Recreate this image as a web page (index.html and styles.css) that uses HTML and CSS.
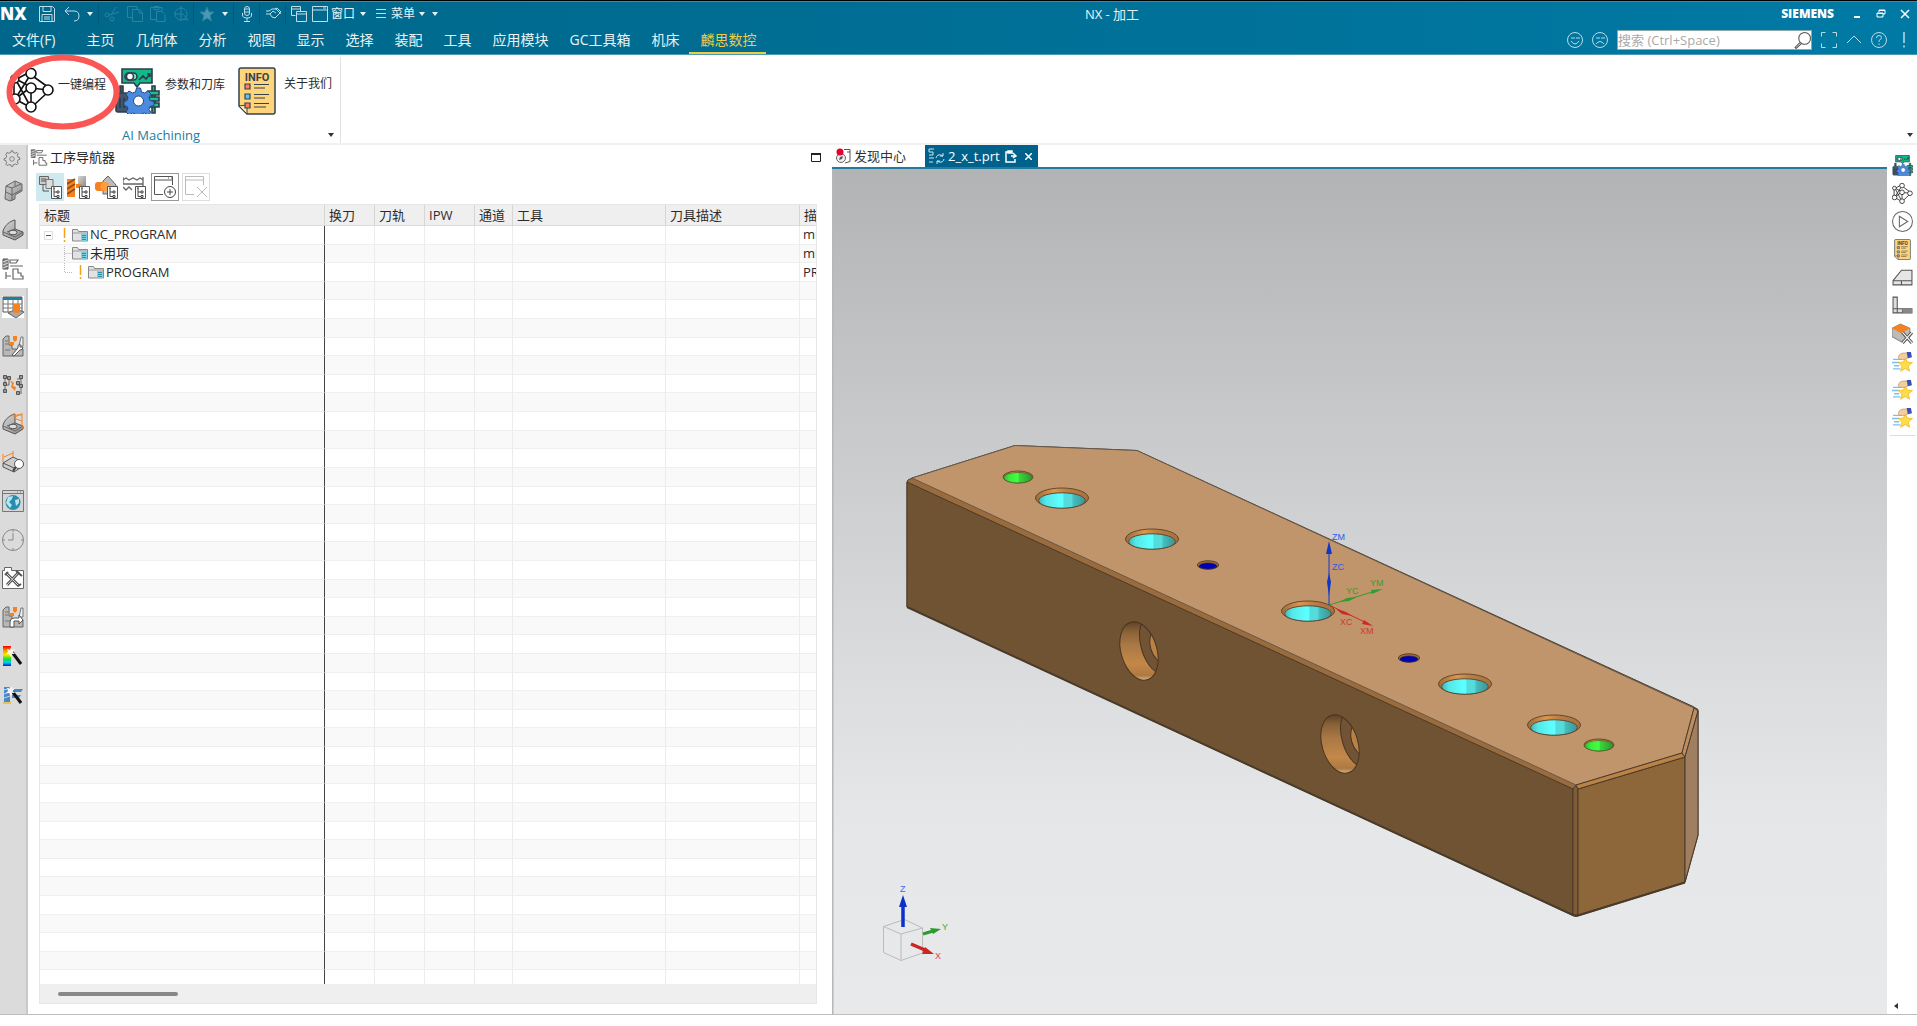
FILE: index.html
```html
<!DOCTYPE html>
<html lang="zh-CN">
<head>
<meta charset="utf-8">
<title>NX - 加工</title>
<link rel="stylesheet" href="styles.css">
</head>
<body>
<svg class="defs" aria-hidden="true">
  <defs>
    <linearGradient id="metal" x1="0" y1="0" x2="1" y2="1"><stop offset="0" stop-color="#d6d6d6"/><stop offset="1" stop-color="#8c8c8c"/></linearGradient>
    <linearGradient id="sky" x1="0" y1="0" x2="0" y2="1"><stop offset="0" stop-color="#b2b3b5"/><stop offset=".3" stop-color="#c8c9cb"/><stop offset=".66" stop-color="#dfe0e2"/><stop offset=".78" stop-color="#e5e7e9"/><stop offset="1" stop-color="#e7e9eb"/></linearGradient>
    <linearGradient id="cyan"><stop offset="0" stop-color="#3fb9bb"/><stop offset=".15" stop-color="#55e6e6"/><stop offset=".45" stop-color="#5cffff"/><stop offset=".52" stop-color="#5cffff"/><stop offset=".54" stop-color="#54dcdc"/><stop offset=".7" stop-color="#54dcdc"/><stop offset=".75" stop-color="#45bcbc"/><stop offset="1" stop-color="#3f9394"/></linearGradient>
    <linearGradient id="green"><stop offset="0" stop-color="#34b834"/><stop offset=".2" stop-color="#3dea3d"/><stop offset=".5" stop-color="#42ff42"/><stop offset=".54" stop-color="#38d838"/><stop offset="1" stop-color="#2c972c"/></linearGradient>
    <linearGradient id="rim"><stop offset="0" stop-color="#9a6b3d"/><stop offset=".35" stop-color="#dd964d"/><stop offset=".6" stop-color="#b87f45"/><stop offset="1" stop-color="#a5713e"/></linearGradient>
    <linearGradient id="bore" x1="0" y1="0" x2="0" y2="1"><stop offset="0" stop-color="#4e3a24"/><stop offset=".2" stop-color="#8a6237"/><stop offset=".4" stop-color="#a87845"/><stop offset=".7" stop-color="#c48848"/><stop offset=".88" stop-color="#ad7942"/><stop offset="1" stop-color="#f0d0a8"/></linearGradient>
    <linearGradient id="rainbow" x1="0" y1="0" x2="0" y2="1"><stop offset="0" stop-color="#f20000"/><stop offset=".25" stop-color="#ff9d00"/><stop offset=".45" stop-color="#e6f000"/><stop offset=".65" stop-color="#16e032"/><stop offset=".82" stop-color="#00d0f0"/><stop offset="1" stop-color="#0018d8"/></linearGradient>
  </defs>
  <symbol id="network" viewBox="0 0 44 45"><g fill="none" stroke="#111" stroke-width="1.600"><path d="M18 5 3 13M24 9 38 19M19 9 7 28M21 19 4 10M21 19 5 31M21 20 38 22M21 19V36M16 37 5 31M4 13V28M24 37 38 24M6 12 19 36"/><g fill="#fff"><circle cx="21" cy="5.500" r="5"/><circle cx="4.800" cy="11" r="4"/><circle cx="21" cy="20" r="5"/><circle cx="38" cy="22" r="5"/><circle cx="5" cy="31" r="5"/><circle cx="21" cy="39" r="5"/></g></g></symbol>
  <symbol id="params" viewBox="0 0 46 46"><g stroke="#2b3d4d" stroke-width="1.600"><path d="M8 1h30v14H26l-3 4-3-4H8z" fill="#12b886"/><rect x="11" y="5" width="12" height="7" rx="3.500" fill="#8fe3cc"/><circle cx="16" cy="8.500" r="3.500" fill="#fff"/><path d="m25 12 4-4 3 3 4-5M33 6h3v3" fill="none"/><path d="M6 18h3v6H6z" fill="#44576a"/><rect x="2" y="25" width="12" height="19" rx="2" fill="#44576a"/><path d="M6 30v10M10 30v10" fill="none"/><path d="M38 18h3v27h-3z" fill="#12b886"/><path d="M34 23h11v4H34zM35 29h10v4H35zM34 35h11v4H34z" fill="#18c391"/></g><path d="m22.500 20h4l1 4 3 1 3.500-2 3 3-2 3.500 1 3 4 1v4l-4 1-1 3 2 3-3 2.500-3.500-2-3 1-1 1h-4l-1-1-3-1-3.500 2-3-3 2-3.500-1-2-3-1v-4l3-1 1-3-2-3.500 3-3 3.500 2 3-1z" fill="#4a8be0" stroke="#254b7d"/><circle cx="24.500" cy="33" r="5" fill="#fff" stroke="#254b7d"/></symbol>
  <symbol id="info" viewBox="0 0 38 48"><path d="M3 1h32q2 0 2 2v42q0 2-2 2H9l-8-8V3q0-2 2-2z" fill="#ffd57c" stroke="#36434d" stroke-width="1.500"/><path d="m1 39 8-1v9z" fill="#ffe9b5" stroke="#36434d"/><g stroke="#36434d" stroke-width="1.200"><path d="M7 17h5v5H7z" fill="#ff7e61"/><path d="M7 27h5v5H7z" fill="#60c6ed"/><path d="M7 36h5v5H7z" fill="#ff7e61"/><path d="M16 17.500h15M16 21h11M16 27.500h15M16 31h11M16 36.500h15M16 40h12"/></g><text x="19" y="14" text-anchor="middle" class="info-word">INFO</text></symbol>
  <symbol id="folder" viewBox="0 0 16 14"><path d="M.5 1.500h5l1 2h9v9.500H.5z" fill="#e2e2e2" stroke="#888"/><path d="M1 5h14" stroke="#999"/><path d="M9 6h6v7H9z" fill="#7fd0e4"/><path d="M10 7.500h4M10 9.500h4M10 11.500h4" stroke="#2e8ca8"/></symbol>
  <symbol id="tree" viewBox="0 0 11 13"><path d="M.5.5h10v12H.5z" fill="#fff" stroke="#555"/><path d="M3 2v8.500h3M3 6h3M6 5h2v2H6zM6 9.500h2v2H6zM2 2h2" fill="none" stroke="#444"/></symbol>
  <symbol id="opnav" viewBox="0 0 22 22"><path d="M1 1h5v10H1z" fill="#888" stroke="#555"/><path d="m1 4 5-2M1 7l5-2M1 10l5-2" stroke="#ddd"/><path d="M8 2h8l-2 3H8zM8 8h13M4 14v7M4 18h5M11 21V11h5v4h3v3h2v3z" fill="none" stroke="#666" stroke-width="1.200"/></symbol>
  <symbol id="machine" viewBox="0 0 22 22"><path d="M1 4 4 1h3v9h3v4h11v7H1z" fill="#b8b8b8" stroke="#666"/><path d="M3 6h3M3 9h3M3 15h5M17 11l2-9 2 0v9z" fill="#eee" stroke="#777"/><path d="M11 1h4v4l-2 2-2-2zM8 7h4v3H8z" fill="#f5821f"/></symbol>
  <symbol id="block" viewBox="0 0 22 22"><path d="m1 12 10-6 10 5v4l-9 6-11-5z" fill="#ccc" stroke="#555"/><path d="m1 12 11 5 9-6M12 17v4" fill="none" stroke="#555"/></symbol>
  <symbol id="bracket" viewBox="0 0 22 22"><path d="M1 12C3 6 8 2 13 1v9l8 3v3l-8 5-12-5z" fill="url(#metal)" stroke="#555"/><path d="m1 13 12 5 8-5M13 10 5 13" fill="none" stroke="#666"/><ellipse cx="11" cy="13.500" rx="4" ry="2.300" fill="#ddd" stroke="#555"/></symbol>
  <symbol id="wand" viewBox="0 0 22 22"><path d="m10 7 9 12" stroke="#111" stroke-width="3"/><path d="m9 2 1 3 3-1-2 3 2 2-3 0-1 3-2-3-3 0 2-2-1-3 3 1z" fill="#fff" opacity=".9"/></symbol>
  <symbol id="star" viewBox="0 0 20 20"><path d="M1 8h8M0 11h7M2 14h5M1 17h7" stroke="#79c0ef" stroke-width="1.300"/><path d="m12.500 6 2 4.500 5 .5-4 3.300 1.300 5-4.300-2.600-4.300 2.600 1.300-5L6 11l5-.5z" fill="#ffdc4a" stroke="#e9b724" stroke-width=".7"/><path d="M6 6q1-4 5-4h4l1 4-4 2H7z" fill="#f4cf9d" stroke="#ba8850" stroke-width=".6"/><path d="M14 1h4l1 5-4 1z" fill="#3b4fb8"/></symbol>
  <symbol id="caret" viewBox="0 0 6 4"><path d="M0 0h6L3 4z" fill="currentColor"/></symbol>
</svg>

<header class="app-header">
  <div class="title-row">
    <div class="quick">
      <span class="nx">NX</span>
      <div class="group">
        <button class="tool" aria-label="保存"><svg viewBox="0 0 16 16"><path d="M.5.5h13l2 2v13H.5zM4 .5v5h8v-5M3 15.500v-7h10v7M5 11h6M5 13h6"/></svg></button>
        <button class="tool undo" aria-label="撤消"><svg viewBox="0 0 16 16"><path d="M5 1 1 5l4 4M1 5h9q5 0 5 5t-5 5"/></svg></button>
        <button class="caret" aria-label="撤消列表"><svg><use href="#caret"/></svg></button>
      </div>
      <div class="group">
        <button class="tool" disabled aria-label="剪切"><svg viewBox="0 0 16 16"><path d="M12 1 7 9M15 6 5 9"/><circle cx="3" cy="9" r="2"/><circle cx="8" cy="13" r="2"/></svg></button>
        <button class="tool" disabled aria-label="复制"><svg viewBox="0 0 16 16"><path d="M10 3V.500H.500v11H5M5.500 3.500h7l3 3v9h-10zM12 4v3h3"/></svg></button>
        <button class="tool" disabled aria-label="粘贴"><svg viewBox="0 0 16 16"><path d="M6 13.500H.500v-12H12V5M4 .500h5v3H4zM6.500 5.500H12l3 3v7H6.500z"/></svg></button>
        <button class="tool" disabled aria-label="重复命令"><svg viewBox="0 0 16 16"><circle cx="8" cy="8" r="6"/><path d="M8 0v15M1 8h9l5 6-5-1"/></svg></button>
      </div>
      <div class="group">
        <button class="tool" disabled aria-label="收藏"><svg viewBox="0 0 16 16"><path class="solid" d="m8 1 2 5h5l-4 3.500L12.500 15 8 12l-4.500 3L5 9.500 1 6h5z"/></svg></button>
        <button class="caret" aria-label="收藏列表"><svg><use href="#caret"/></svg></button>
      </div>
      <div class="group">
        <button class="tool" aria-label="语音"><svg viewBox="0 0 16 16"><rect x="5.500" y=".5" width="5" height="9" rx="2.500"/><path d="M3.500 7v2q0 3 4.500 3t4.500-3V7M8 12v3.500M5 15.500h6M6 3h4M6 6h4"/></svg></button>
      </div>
      <div class="group">
        <button class="tool" aria-label="触控"><svg viewBox="0 0 16 16"><path d="M1 5h3l3-2h4l4 4-5 5-3-1-2-3 3-3 3 2M1 8h4M10 3l2-1 4 4-1 2"/></svg></button>
      </div>
      <div class="group last">
        <button class="tool" aria-label="切换窗口"><svg viewBox="0 0 16 16"><path d="M4.500 9.500h-4v-9h9V5M.500 3h9M5.500 5.500h10v10h-10zM5.500 8h10"/></svg></button>
        <button class="menu"><svg viewBox="0 0 16 16"><path d="M.500.500h15v15H.500zM.500 4h15M11 2h3"/></svg><span>窗口</span><svg class="small"><use href="#caret"/></svg></button>
        <button class="menu list"><svg viewBox="0 0 10 12"><path d="M0 1.500h10M0 5.500h10M0 9.500h10"/></svg><span>菜单</span><svg class="small"><use href="#caret"/></svg></button>
        <button class="caret" aria-label="自定义"><svg><use href="#caret"/></svg></button>
      </div>
    </div>
    <h1>NX - 加工</h1>
    <div class="window-tools">
      <span class="brand">SIEMENS</span>
      <button aria-label="最小化"><svg viewBox="0 0 10 10"><path d="M2 8h6" stroke-width="2"/></svg></button>
      <button aria-label="还原"><svg viewBox="0 0 10 10"><path d="M3 3V1h6v4H7M1 4h6v4H1zM1 4.500h6M3 1.500h6"/></svg></button>
      <button aria-label="关闭"><svg viewBox="0 0 10 10"><path d="m1 1 8 8M9 1 1 9" stroke-width="1.500"/></svg></button>
    </div>
  </div>
  <div class="tab-row">
    <nav class="tabs">
      <a href="#" class="file">文件(F)</a><a href="#">主页</a><a href="#">几何体</a><a href="#">分析</a><a href="#">视图</a><a href="#">显示</a><a href="#">选择</a><a href="#">装配</a><a href="#">工具</a><a href="#">应用模块</a><a href="#">GC工具箱</a><a href="#">机床</a><a href="#" class="current">麟思数控</a>
    </nav>
    <div class="help">
      <button aria-label="满意"><svg viewBox="0 0 16 16"><circle cx="8" cy="8" r="7.500"/><path d="M4 9q4 6 8 0M5 5v2M7 5v2M10 5v2M12 5v2"/></svg></button>
      <button aria-label="不满意"><svg viewBox="0 0 16 16"><circle cx="8" cy="8" r="7.500"/><path d="M4 12q4-5 8 0M5 5v2M7 5v2M10 5v2M12 5v2"/></svg></button>
      <label class="search"><input type="text" aria-label="搜索" placeholder="搜索 (Ctrl+Space)"><svg viewBox="0 0 16 16"><circle cx="10" cy="6" r="5.500"/><path d="M6 9.500 1 14.500l1 1 5.500-5"/></svg></label>
      <button aria-label="全屏"><svg viewBox="0 0 16 16"><path d="M.500 4.500v-4h4M11.500.500h4v4M15.500 11.500v4h-4M4.500 15.500h-4v-4"/></svg></button>
      <button aria-label="折叠功能区"><svg viewBox="0 0 16 16"><path d="m1 11 7-7 7 7"/></svg></button>
      <button aria-label="帮助"><svg viewBox="0 0 16 16"><circle cx="8" cy="8" r="7.500"/><path d="M5.500 6q0-2.500 2.500-2.500t2.500 2q0 1.500-2.500 3V10M8 11.500V13"/></svg></button>
      <button aria-label="通知"><svg viewBox="0 0 16 16"><path d="M8 0v11M8 13.500v2" stroke-width="1.500"/></svg></button>
    </div>
  </div>
</header>

<section class="ribbon">
  <div class="ribbon-group">
    <div class="commands">
      <button><svg width="44" height="45"><use href="#network"/></svg><span>一键编程</span></button>
      <button><svg width="46" height="46"><use href="#params"/></svg><span>参数和刀库</span></button>
      <button><svg width="38" height="48"><use href="#info"/></svg><span>关于我们</span></button>
    </div>
    <div class="group-label"><span>AI Machining</span><svg class="small"><use href="#caret"/></svg></div>
    <svg class="callout" viewBox="0 0 114 76"><ellipse cx="57" cy="38" rx="53.500" ry="34.500"/></svg>
  </div>
  <svg class="small ribbon-more"><use href="#caret"/></svg>
</section>

<main class="workspace">
  <aside class="resource-bar">
    <button class="gear" aria-label="设置"><svg viewBox="0 0 22 22"><path d="m9.500 3 .5-2h2l.5 2 2.500 1 2-1 1.500 1.500-1 2 1 2.500 2 .5v2l-2 .5-1 2.500 1 2-1.500 1.500-2-1-2.500 1-.5 2h-2l-.5-2L7 18l-2 1-1.500-1.500 1-2-1-2.500-2-.5v-2l2-.5 1-2.500-1-2L5 3l2 1z" fill="none" stroke="#777" stroke-width="1.200"/><circle cx="11" cy="11" r="2.800" fill="none" stroke="#777"/></svg></button>
    <div class="resource-list">
      <button aria-label="装配导航器"><svg viewBox="0 0 22 22"><path d="m4 6 9-5 7 3v7l-7 4v4l-5 2-5-2z" fill="url(#metal)" stroke="#666"/><path d="m4 6 6 2 9-4M10 8v13M4 12l6 3 9-5M13 1v5" fill="none" stroke="#666"/></svg></button>
      <button aria-label="部件导航器"><svg><use href="#bracket"/></svg></button>
      <button class="active" aria-label="工序导航器"><svg><use href="#opnav"/></svg></button>
      <button aria-label="加工特征导航器"><svg viewBox="0 0 22 22"><path d="M0 0h22v22H0z" fill="#fff"/><path d="M1 1h19v15H1z" fill="#fff" stroke="#555"/><path d="M1 1h19v3H1z" fill="#208099"/><path d="M1 8h19M1 12h19M6 4v12M11 4v12M16 4v12" stroke="#777"/><path d="m6 17 8-4 8 3-8 6z" fill="#aaa" stroke="#666"/><path d="M11 8h7v8q-3 2-7 0z" fill="#f5821f"/></svg></button>
      <button aria-label="机床导航器"><svg><use href="#machine"/></svg><svg class="over" viewBox="0 0 22 22"><path d="m10 20 6-7q-1-3 2-4v3h3q0 3-3 3l-6 6z" fill="#fff" stroke="#555"/></svg></button>
      <button aria-label="流程"><svg viewBox="0 0 22 22"><path d="M3 3v16M19 3v17M3 11h4V5M15 5h4M15 11h4" fill="none" stroke="#666"/><g fill="#999" stroke="#555"><path d="M1.500 1.500h3v3h-3zM5.500 2.500h3v3h-3zM1.500 8.500h3v3h-3zM1.500 15.500h3v3h-3zM17.500 1.500h3v3h-3zM14.500 7.500h3v3h-3zM17.500 10.500h3v3h-3zM14.500 17.500h3v3h-3z"/></g><path d="m8 6 4 3-1 3 3 1-1 4-4-4 1-3z" fill="#f5821f"/></svg></button>
      <button aria-label="测量"><svg><use href="#bracket"/></svg><svg class="over" viewBox="0 0 22 22"><path d="M12 2h8M12 0v4M20 0v16M13 4l6-3M14 6l6 2" stroke="#f5821f" fill="none"/></svg></button>
      <button aria-label="检查"><svg><use href="#block"/></svg><svg class="over" viewBox="0 0 22 22"><path d="m1 3v8M2 6l9-4M11 0v6" stroke="#f5821f" fill="none"/><circle cx="17" cy="13" r="4.500" fill="#fff" stroke="#555"/><path d="m14 16-3 4" stroke="#444" stroke-width="2"/></svg></button>
      <button aria-label="浏览器"><svg viewBox="0 0 22 22"><path d="M.500.500h21v21H.500z" fill="#d5d5d5" stroke="#777"/><path d="M0 3.500h22M15 2h1M18 2h1" stroke="#777"/><circle cx="11" cy="12.500" r="7.500" fill="#2a8db0"/><path d="m6 7 5-1-1 3-3 3 3 3-2 3-4-5zM13 10l4-1v4l-3 3z" fill="#b9e5ee"/></svg></button>
      <button aria-label="历史记录"><svg viewBox="0 0 22 22"><circle cx="11" cy="11" r="10.500" fill="none" stroke="#888"/><path d="M11 4v7H6M11 1v2M11 19v2M1 11h2M19 11h2" fill="none" stroke="#888"/></svg></button>
      <button aria-label="工具"><svg viewBox="0 0 22 22"><path d="M.500 3.500h2v-3h7v3h12v18H.500z" fill="#fff" stroke="#666"/><path d="m5 18 12-13M5 7l12 12" stroke="#555" stroke-width="3"/><path d="m5 18 12-13M5 7l12 12" stroke="#ddd"/><path d="m14 4 6 5M3 8l3-3M16 19l3-2" stroke="#555" stroke-width="2"/></svg></button>
      <button aria-label="机床控制"><svg><use href="#machine"/></svg><svg class="over" viewBox="0 0 22 22"><path d="M8 21v-5q0-4 4-4h5V9l4 5-4 4v-3h-5v6z" fill="#fff" stroke="#555"/></svg></button>
      <button aria-label="颜色"><svg viewBox="0 0 22 22"><path d="M1 1h8v20H1z" fill="url(#rainbow)"/></svg><svg class="over"><use href="#wand"/></svg></button>
      <button aria-label="分析向导"><svg viewBox="0 0 22 22"><path d="M2 3h6v15H2zM9 5h12l-2 3H9zM10 11h9l-2 3h-7z" fill="#4b88c9"/><path d="m2 6 6-2M2 10l6-2M2 14l6-2" stroke="#b7d5f5"/><path d="M1 19h8" stroke="#e7c44b" stroke-width="2"/></svg><svg class="over"><use href="#wand"/></svg></button>
    </div>
  </aside>

  <section class="navigator">
    <div class="nav-title"><svg width="18" height="17"><use href="#opnav"/></svg><h2>工序导航器</h2><button aria-label="最大化"><svg viewBox="0 0 10 9"><path d="M.500.500h9v8h-9z" fill="none" stroke="#222"/><path d="M0 1h10" stroke="#222" stroke-width="2"/></svg></button></div>
    <div class="nav-tools">
      <button class="on" aria-label="程序顺序视图"><svg viewBox="0 0 22 22"><path d="M.500.500h9v8h-9z" fill="#ccc" stroke="#666"/><path d="M7 3.500h7v9H7z" fill="#ddd" stroke="#777"/><path d="M2 3h5M2 5h5M4 9v6h6" fill="none" stroke="#555"/></svg><svg class="badge"><use href="#tree"/></svg></button>
      <button aria-label="机床视图"><svg viewBox="0 0 22 22"><path d="M0 3h8v18H0z" fill="#f5821f"/><path d="m0 8 8-5M0 13l8-5M0 18l8-5" stroke="#8c4b18" stroke-width="1.500"/><path d="M11 0h8v10h-8z" fill="url(#metal)"/><path d="M9 8h6v4H9z" fill="#f5821f"/></svg><svg class="badge"><use href="#tree"/></svg></button>
      <button aria-label="几何视图"><svg viewBox="0 0 22 22"><path d="m8 5 5-5 8 9v9H8z" fill="#bbb" stroke="#666"/><rect x="0" y="6" width="12" height="9" rx="3" fill="#f5821f"/><circle cx="10" cy="10.500" r="4.500" fill="#ff9d42"/></svg><svg class="badge"><use href="#tree"/></svg></button>
      <button aria-label="加工方法视图"><svg viewBox="0 0 22 22"><path d="M0 1v7M20 1v9M0 4l3-2 3 2 4-2 4 2 3-2 3 2M0 8h20M0 11l3 3 3-3 3 3" fill="none" stroke="#666" stroke-width="1.300"/></svg><svg class="badge"><use href="#tree"/></svg></button>
      <button class="boxed" aria-label="新建窗口"><svg viewBox="0 0 22 22"><path d="M9 18.500H.500V.500h18V9M.500 4h18M14 2h1M17 2h1" fill="none" stroke="#555"/><circle cx="16" cy="16" r="5.500" fill="#fff" stroke="#444"/><path d="M13 16h6M16 13v6" stroke="#444"/></svg></button>
      <button class="boxed faint" disabled aria-label="关闭窗口"><svg viewBox="0 0 22 22"><path d="M9 18.500H.500V.500h18V9M.500 4h18M12 11l10 10M22 11 12 21" fill="none" stroke="#bbb"/></svg></button>
    </div>
    <div class="grid">
      <div class="grid-body">
        <table>
          <colgroup><col class="c-title"><col class="c-mid"><col class="c-mid"><col class="c-mid"><col class="c-channel"><col class="c-tool"><col class="c-desc"><col></colgroup>
          <thead><tr><th>标题</th><th>换刀</th><th>刀轨</th><th>IPW</th><th>通道</th><th>工具</th><th>刀具描述</th><th>描述</th></tr></thead>
          <tbody id="operations">
            <tr><td><div class="node"><svg width="32" height="18"><path d="M4.500 5.500h8v8h-8z" fill="#fff" stroke="#ddd"/><path d="M6 9.500h5" stroke="#555"/><path d="M24.500 2v10M24.500 14v2" stroke="#f5a11d" stroke-width="1.500"/></svg><svg width="16" height="14"><use href="#folder"/></svg><span>NC_PROGRAM</span></div></td><td></td><td></td><td></td><td></td><td></td><td></td><td>mill</td></tr>
            <tr><td><div class="node"><svg width="32" height="18"><path d="M24.500 0v18M24.500 9.500H32" fill="none" stroke="#bbb" stroke-dasharray="1 1"/></svg><svg width="16" height="14"><use href="#folder"/></svg><span>未用项</span></div></td><td></td><td></td><td></td><td></td><td></td><td></td><td>mill</td></tr>
            <tr><td><div class="node"><svg width="48" height="18"><path d="M24.500 0v9.500H32" fill="none" stroke="#bbb" stroke-dasharray="1 1"/><path d="M40.500 2v10M40.500 14v2" stroke="#f5a11d" stroke-width="1.500"/></svg><svg width="16" height="14"><use href="#folder"/></svg><span>PROGRAM</span></div></td><td></td><td></td><td></td><td></td><td></td><td></td><td>PROGRAM</td></tr>
          </tbody>
        </table>
      </div>
      <div class="scroll"><div class="thumb"></div></div>
    </div>
  </section>

  <section class="view">
    <div class="doc-tabs">
      <button class="doc"><svg width="15" height="16" viewBox="0 0 15 16"><path d="M8 1.500h6v12L9 15M11 4h3" fill="none" stroke="#555"/><circle cx="5" cy="10" r="4.500" fill="#eee" stroke="#666"/><path d="m3 12 1-3 3-1-1 3z" fill="#555"/><circle cx="4" cy="4" r="3.500" fill="#e4002b"/></svg><span>发现中心</span></button>
      <button class="doc current"><svg width="17" height="16" viewBox="0 0 17 16"><path d="M6 1H1v3h4v3H1M6 10H1M5 14H1M8 10q1-4 5-3l2 1M15 5v3h-3M16 11q-1 4-5 3l-2-1M9 16v-3h3" fill="none" stroke="#cfe6ef"/></svg><span>2_x_t.prt</span><svg width="12" height="13" viewBox="0 0 12 13"><path d="M7 2H1v10h9V9M3 1h4v2H3zM8 3l3 3-3 2M11 6H6" fill="none" stroke="#fff" stroke-width="1.500"/></svg><svg class="shut" width="7" height="7" viewBox="0 0 7 7"><path d="m0 0 7 7M7 0 0 7" stroke="#fff" stroke-width="1.500"/></svg></button>
    </div>
    <svg class="scene" viewBox="832 169 1055 845" preserveAspectRatio="xMidYMid slice" role="img" aria-label="2_x_t.prt">
      <defs>
        <clipPath id="bore-clip"><ellipse rx="18" ry="30" transform="rotate(-16)"/></clipPath>
        <g id="hole"><ellipse rx="26.500" ry="10" fill="url(#rim)" stroke="#66482a"/><ellipse cy="2.500" rx="23.300" ry="7.700" fill="url(#cyan)" stroke="#5c4935"/></g>
        <g id="pin"><ellipse rx="15" ry="6" fill="url(#rim)" stroke="#66482a"/><ellipse cy=".7" rx="14.300" ry="5.200" fill="url(#green)" stroke="#4c5a2b" stroke-width=".7"/></g>
        <g id="dowel"><ellipse rx="10.700" ry="4.200" fill="#a06d3b" stroke="#5c4128"/><ellipse cy="1" rx="9" ry="3" fill="#0000b8" stroke="#222040" stroke-width=".6"/></g>
        <g id="sidebore"><g clip-path="url(#bore-clip)"><path d="M-22-32h44v64h-44z" fill="url(#bore)"/><g transform="translate(18 -6)"><ellipse rx="16" ry="30" transform="rotate(-16)" fill="#725434" stroke="#463421"/><ellipse cx="2" cy="2" rx="9" ry="16" transform="rotate(-16)" fill="#b98145" stroke="#463421"/></g></g><ellipse rx="18" ry="30" transform="rotate(-16)" fill="none" stroke="#463421"/></g>
      </defs>
      <rect x="0" y="169" width="2700" height="845" fill="url(#sky)"/>
      <path d="M832.500 169v845" stroke="#b5b7b9" stroke-width="2"/>
      <g stroke-linejoin="round" stroke="#4b3b2a">
        <path d="m908 480 4-2 103-32.500 122 5 556 256 5 3v126l-13 47-109 34-3-1L907 607V482z" fill="#9a6b3c"/>
        <path d="m912 478 103-32.500 122 5 557 257.500-12 45-106 32z" fill="#c1956b" stroke="#65594c"/>
        <path d="m907 482 666 307v126L907 607z" fill="#705333"/>
        <path d="m1573 789 3-4 2 4v126h-5z" fill="#805d36"/>
        <path d="m1578 789 107-32v125l-107 33z" fill="#8d663a"/>
        <path d="m1576 785 106-32 3 4-107 32z" fill="#ba8246"/>
        <path d="m1682 753 12-45 4 3-13 46z" fill="#bd8e60"/>
        <path d="m1685 757 13-46v124l-13 47z" fill="#9f7f60"/>
        <path d="m907 607 667 308.500 4 0 107-33" fill="none" stroke-width="2"/>
      </g>
      <use href="#hole" x="1062" y="498"/><use href="#hole" x="1152" y="539"/><use href="#hole" x="1308" y="611"/><use href="#hole" x="1465" y="684"/><use href="#hole" x="1554" y="725"/>
      <use href="#pin" x="1018" y="477"/><use href="#pin" x="1599" y="745"/>
      <use href="#dowel" x="1208" y="565"/><use href="#dowel" x="1409" y="658"/>
      <use href="#sidebore" x="1139" y="651"/><use href="#sidebore" x="1340" y="744"/>
      <g class="axis">
        <g fill="#1038c8" stroke="#1038c8"><path d="M1329 605v-60"/><path stroke="none" d="m1329 541 3 13h-6zM1329 573l2 9-2 14-2-14z"/></g>
        <g fill="#2f9e2f" stroke="#2f9e2f"><path d="m1329 605 50-15"/><path stroke="none" d="m1383 589-12 1 1 4zM1357 597l-10 1-8 4 10-1z"/></g>
        <g fill="#cc2a2a" stroke="#cc2a2a"><path d="m1329 605 40 19"/><path stroke="none" d="m1373 626-11-2 2-4zM1352 616l-10-2-6-5 10 3z"/></g>
        <g fill="#2a59ee"><text x="1332" y="540">ZM</text><text x="1332" y="570">ZC</text></g>
        <g fill="#3a9a35"><text x="1370" y="586">YM</text><text x="1346" y="594">YC</text></g>
        <g fill="#cf3838"><text x="1340" y="625">XC</text><text x="1360" y="634">XM</text></g>
      </g>
      <g class="axis">
        <path d="m883.500 926.500 17.500 7.500 21.500-6-18-8.500zv26l17.500 8v-26.500M901 960.500l21.500-7.500v-25" fill="none" stroke="#bbb"/>
        <path d="M903 927v-20" stroke="#0a32c8" stroke-width="3.500"/><path d="m903 895 4 12h-8z" fill="#0a32c8"/>
        <path d="m923 934 10-3" stroke="#2f9b2f" stroke-width="3"/><path d="m941 929-11-1 3 6z" fill="#2f9b2f"/>
        <path d="m911 944 14 6" stroke="#cc2525" stroke-width="3.500"/><path d="m934 954-12 0 3-7z" fill="#cc2525"/>
        <text x="900" y="892" fill="#3d6cf0">Z</text><text x="942" y="930" fill="#46a546">Y</text><text x="935" y="959" fill="#dc4545">X</text>
      </g>
    </svg>
  </section>

  <aside class="right-bar">
    <button aria-label="参数和刀库"><svg><use href="#params"/></svg></button>
    <button aria-label="一键编程"><svg><use href="#network"/></svg></button>
    <button aria-label="运行"><svg viewBox="0 0 20 20"><circle cx="10" cy="10" r="9.500" fill="none" stroke="#666"/><path d="m7 5 8 5-8 5z" fill="none" stroke="#666"/></svg></button>
    <button aria-label="关于我们"><svg><use href="#info"/></svg></button>
    <button aria-label="毛坯"><svg viewBox="0 0 20 20"><path d="M1 13 9 3h10v14H1zM1 13h18M9 13v4" fill="#e5e5e5" stroke="#555"/></svg></button>
    <button aria-label="支架"><svg viewBox="0 0 20 20"><path d="M1 2h4v11h14v4H1zM1 13h4v4M10 13v4" fill="#ddd" stroke="#555"/><path d="M10 13h9v4h-9z" fill="#888"/></svg></button>
    <button aria-label="删除体"><svg viewBox="0 0 20 20"><path d="m0 5 8-4 9 4v8l-8 5-9-5z" fill="#bbb" stroke="#888"/><path d="m0 5 8-4 9 4-8 5z" fill="#f5821f"/><path d="m10 9 9 10M19 9l-9 10" stroke="#555" stroke-width="3"/><path d="m10 9 9 10M19 9l-9 10" stroke="#fff"/></svg></button>
    <button aria-label="快捷一"><svg><use href="#star"/></svg></button>
    <button aria-label="快捷二"><svg><use href="#star"/></svg></button>
    <button aria-label="快捷三"><svg><use href="#star"/></svg></button>
    <hr>
    <svg class="more" viewBox="0 0 4 6"><path d="M4 0v6L0 3z" fill="#333"/></svg>
  </aside>
</main>
<footer class="status"></footer>
<script src="app.js"></script>
</body>
</html>
```
FILE: styles.css
```css
* { box-sizing: border-box; }
body {
  margin: 0;
  min-height: 100vh;
  display: flex;
  flex-direction: column;
  background: #fff;
  color: #2b2b2b;
  font: 13px/18px "Open Sans", "Noto Sans CJK SC", sans-serif;
}
button {
  border: 0;
  padding: 0;
  background: none;
  font: inherit;
  color: inherit;
  display: flex;
  align-items: center;
  justify-content: center;
}
h1, h2 { margin: 0; font: inherit; }
.defs { position: absolute; width: 0; height: 0; }
.small { width: 6px; height: 4px; flex: none; }
.info-word { font: 700 11px "Roboto", sans-serif; fill: #36434d; }

/* header */
.app-header {
  height: 55px;
  border-top: 1px solid #000;
  border-bottom: 1px solid #4c98b5;
  background: linear-gradient(90deg, #00678a, #006d93 40%, #007aa5);
  color: #e8f3f7;
}
.title-row {
  display: grid;
  grid-template-columns: 1fr auto 1fr;
  align-items: center;
  height: 25px;
  border-top: 1px solid #3e8aa8;
}
.title-row h1 { margin-left: 307px; }
.quick { display: flex; align-items: center; height: 22px; width: 0; white-space: nowrap; }
.nx { width: 34px; flex: none; font-weight: 800; font-size: 17px; line-height: 24px; color: #fff; }
.group { display: flex; align-items: center; height: 22px; padding: 0 1px; border-right: 1px solid #005a79; }
.group.last { border: 0; }
.tool { width: 23px; height: 22px; }
.tool svg, .menu svg:first-child { width: 16px; height: 16px; fill: none; stroke: #c2dde7; }
.tool:disabled svg { stroke: #2b83a1; }
.tool .solid { fill: #4c99b3; }
.tool.undo { margin-left: 2px; }
.caret { width: 14px; height: 22px; }
.caret svg { width: 6px; height: 4px; }
.menu { gap: 3px; margin-left: 2px; font-size: 12px; }
.menu .small { margin-left: 2px; }
.menu.list { gap: 5px; margin-left: 10px; }
.menu.list svg:first-child { width: 10px; height: 12px; }
.menu.list .small { margin-left: -1px; }
.menu + .caret { margin-left: 3px; }
.window-tools { display: flex; justify-content: flex-end; align-items: center; gap: 14px; padding-right: 7px; }
.window-tools svg { width: 10px; height: 10px; fill: none; stroke: #fff; }
.brand { font-size: 12px; font-weight: 800; color: #fff; margin-right: 4px; }
.tab-row { display: flex; justify-content: space-between; height: 28px; }
.tabs { display: flex; padding-left: 1px; }
.tabs a {
  padding: 0 10px 0 11px;
  height: 28px;
  line-height: 28px;
  font-size: 14px;
  color: #e8f3f7;
  text-decoration: none;
  white-space: nowrap;
}
.tabs .file { margin-right: 10px; }
.tabs .current { color: #f2cb45; border-bottom: 2px solid #f2cb45; }
.help { display: flex; align-items: center; height: 28px; gap: 9px; padding-right: 5px; }
.help button svg { width: 16px; height: 16px; fill: none; stroke: #b9dbe7; }
.search {
  display: flex;
  align-items: center;
  width: 195px;
  height: 20px;
  border: 1px solid #8aa;
  background: #fff;
}
.search input {
  flex: 1;
  min-width: 0;
  padding: 0;
  border: 0;
  outline: 0;
  background: none;
  font: inherit;
}
.search input::placeholder { color: #aaa; }
.search svg { width: 17px; height: 17px; fill: none; stroke: #555; }

/* ribbon */
.ribbon { position: relative; display: flex; justify-content: space-between; align-items: flex-end; height: 90px; border-bottom: 2px solid #f1f1f1; }
.ribbon-group {
  position: relative;
  width: 341px;
  height: 86px;
  border-right: 1px solid #e2e2e2;
  display: flex;
  flex-direction: column;
  justify-content: space-between;
}
.commands { display: flex; gap: 8px; padding: 9px 0 0 10px; font-size: 12px; }
.commands button { align-items: flex-start; gap: 4px; height: 50px; padding-top: 2px; }
.commands button + button { gap: 5px; }
.commands button:last-child { gap: 8px; margin-left: 5px; padding-top: 1px; }
.commands span { padding-top: 8px; white-space: nowrap; }
.group-label { display: flex; justify-content: flex-end; align-items: center; padding-right: 6px; color: #1c7c9f; height: 17px; }
.group-label span { margin-right: 128px; }
.group-label .small, .ribbon-more { color: #333; }
.ribbon-more { margin: 0 4px 6px 0; }
.callout { position: absolute; left: 6px; top: -3px; width: 114px; height: 76px; fill: none; stroke: #fa5654; stroke-width: 6px; }

/* workspace */
.workspace { flex: 1; display: grid; grid-template-columns: 28px minmax(0, 804fr) minmax(0, 1055fr) 30px; border-bottom: 1px solid #bcbcbc; }
.resource-bar { background: #dbdbdb; border-right: 2px solid #c9c9c9; }
.resource-bar button { position: relative; width: 28px; padding-right: 2px; }
.resource-bar button svg { width: 22px; height: 22px; }
.resource-bar .over { position: absolute; left: 2px; }
.resource-bar .gear { height: 27px; padding-right: 4px; }
.resource-bar .gear svg { width: 18px; height: 18px; }
.resource-list { display: grid; grid-auto-rows: 1fr; height: 542px; }
.resource-list .active { background: #fff; }

.navigator { display: flex; flex-direction: column; padding: 0 15px 10px 11px; }
.nav-title { display: flex; align-items: center; height: 24px; gap: 2px; margin: 0 -4px 0 -9px; }
.nav-title h2 { flex: 1; color: #222; }
.nav-title button svg { width: 10px; height: 9px; }
.nav-tools { display: flex; height: 35px; padding-top: 4px; margin-left: -3px; }
.nav-tools button { position: relative; width: 28px; height: 28px; }
.nav-tools button > svg { width: 22px; height: 22px; }
.nav-tools button > .badge { position: absolute; right: 2px; bottom: 2px; width: 11px; height: 13px; }
.nav-tools .on { background: #cfe9ef; }
.nav-tools .boxed { border: 1px solid #999; margin-left: 3px; }
.nav-tools .faint { border-color: #ddd; }

.grid { flex: 1; display: flex; flex-direction: column; border: 1px solid #e6e6e6; }
.grid-body { flex: 1; display: flex; }
table { width: 100%; height: 100%; flex: 1; table-layout: fixed; border-collapse: separate; border-spacing: 0; }
.c-title { width: 285px; }
.c-mid { width: 50px; }
.c-channel { width: 38px; }
.c-tool { width: 153px; }
.c-desc { width: 134px; }
th, td { padding: 0 0 0 4px; overflow: hidden; white-space: nowrap; text-align: left; font-weight: 400; border-right: 1px solid #ececec; }
th { height: 21px; background: #efefef; border-right-color: #d6d6d6; border-bottom: 1px solid #dcdcdc; }
td { height: 18px; line-height: 17px; padding-left: 3px; border-bottom: 1px solid #efefef; }
td:first-child { padding-left: 0; border-right-color: #444; }
th:last-child, td:last-child { border-right: 0; text-overflow: clip; }
tbody tr:nth-child(even) { background: #f9f9f9; }
tbody tr.cut td { height: 13px; border-bottom: 0; }
.node { display: flex; align-items: center; height: 17px; }
.node svg { flex: none; }
.node span { margin-left: 2px; }
.scroll { height: 19px; padding: 8px 0 0 18px; background: #efefef; }
.thumb { width: 120px; height: 4px; border-radius: 2px; background: #888; }

.view { display: flex; flex-direction: column; }
.doc-tabs { display: flex; height: 24px; border-bottom: 2px solid #237a9c; }
.doc { gap: 3px; padding: 0 19px 0 4px; color: #333; }
.doc.current { gap: 3px; padding: 0 6px 0 3px; background: #00628a; color: #fff; }
.doc span + svg { margin-left: 2px; }
.doc .shut { margin-left: 5px; }
.scene { flex: 1; width: 100%; height: 0; display: block; }
.axis text { font: 9px "Liberation Sans", sans-serif; }

.right-bar { display: flex; flex-direction: column; padding: 6px 0 5px; }
.right-bar button { width: 30px; height: 28px; }
.right-bar button svg { width: 21px; height: 21px; }
.right-bar hr { width: 25px; margin: 4px 3px 0; border: 0; border-top: 1px solid #ddd; }
.right-bar .more { width: 4px; height: 6px; margin: auto 0 0 7px; }
.status { height: 11px; }
```
FILE: app.js
```js
// Fill the operation grid with empty rows down to the scroll bar.
const body = document.getElementById("operations");
const ROWS = 41;
while (body.rows.length < ROWS) {
  const row = body.insertRow();
  for (let i = 0; i < 8; i++) row.insertCell();
}
body.lastElementChild.className = "cut";
```
